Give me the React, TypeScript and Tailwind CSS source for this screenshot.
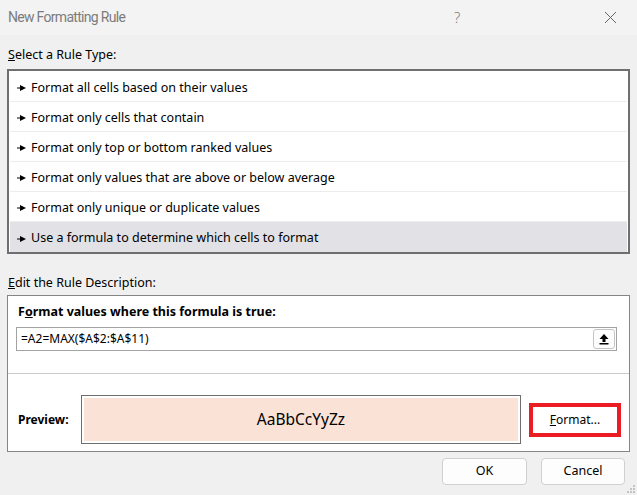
const rules = [
  "Format all cells based on their values",
  "Format only cells that contain",
  "Format only top or bottom ranked values",
  "Format only values that are above or below average",
  "Format only unique or duplicate values",
  "Use a formula to determine which cells to format",
];

function Pointer() {
  return (
    <svg width="10" height="6" viewBox="0 0 10 6" className="shrink-0">
      <rect x="0" y="2.5" width="5" height="1" fill="#000" />
      <path d="M3 0 L9 3 L3 6 Z" fill="#000" />
    </svg>
  );
}

export default function App() {
  return (
    <div
      className="w-[637px] h-[495px] bg-[#f0f0f0] text-black relative overflow-hidden"
      style={{ fontFamily: '"Noto Sans", "Open Sans", sans-serif' }}
    >
      {/* Title bar */}
      <div className="h-[35px] bg-[#f3f3f3] flex items-center pl-[8px]">
        <span
          className="text-[14px] text-[#7c7c7c] flex-1 tracking-[-0.7px]"
          style={{ fontFamily: "Roboto, sans-serif" }}
        >
          New Formatting Rule
        </span>
        <span className="text-[15px] font-light text-[#808080] w-[20px] mr-[130px]">?</span>
        <svg width="13" height="13" viewBox="0 0 13 13" className="mr-[20px]">
          <path d="M1 1 L12 12 M12 1 L1 12" stroke="#666" strokeWidth="1" />
        </svg>
      </div>

      <div className="px-[7px]">
        <div className="pt-[12px] mb-[6px] text-[12.5px] leading-4 pl-[1px]">
          <span className="underline">S</span>elect a Rule Type:
        </div>

        {/* Rule type list */}
        <div className="h-[185px] border-2 border-[#6f6f6f] bg-white p-[1px]">
          {rules.map((r, i) => (
            <div
              key={r}
              className={
                i === rules.length - 1
                  ? "h-[30px] flex items-center gap-[4px] pl-[7px] pt-[3px] bg-[#e1e1e6] text-[12.5px]"
                  : "h-[30px] flex items-center gap-[4px] pl-[7px] pt-[3px] border-b border-[#ececec] text-[12.5px]"
              }
            >
              <Pointer />
              <span>{r}</span>
            </div>
          ))}
        </div>

        <div className="mt-[21px] mb-[4px] text-[12.5px] leading-4 pl-[1px]">
          <span className="underline">E</span>dit the Rule Description:
        </div>

        {/* Description box */}
        <div className="h-[157px] border border-[#858585] bg-white flex flex-col">
          <div className="pt-[8px] pl-[10px] text-[12.5px] font-bold leading-4">
            F<span className="underline">o</span>rmat values where this formula is true:
          </div>
          <div className="mt-[7px] ml-[8px] mr-[12px] h-[24px] border border-[#a3a3a3] flex items-center pl-[4px] pr-px">
            <span className="flex-1 text-[12px]">=A2=MAX($A$2:$A$11)</span>
            <div className="w-[22px] h-[20px] border border-[#c4c4c4] rounded-[3px] bg-[#fdfdfd] flex items-center justify-center">
              <svg width="10" height="12" viewBox="0 0 10 12">
                <path d="M5 1 L9.5 6 L6.5 6 L6.5 9 L3.5 9 L3.5 6 L0.5 6 Z" fill="#000" />
                <rect x="0.5" y="10" width="9" height="1.5" fill="#000" />
              </svg>
            </div>
          </div>
          <div className="mt-[22px] h-px bg-[#cbcbcb]" />
          <div className="flex items-center mt-[21px] pl-[10px]">
            <span className="w-[63px] text-[12px] font-bold">Preview:</span>
            <div className="w-[440px] h-[49px] border border-[#6e6e6e] p-[2px]">
              <div className="h-full bg-[#fbe2d6] flex items-center justify-center text-[15.5px]">
                AaBbCcYyZz
              </div>
            </div>
            <div className="ml-[8px] w-[92px] h-[34px] border-4 border-[#ec1c24] bg-white flex items-center justify-center text-[12px]">
              <span>
                <span className="underline">F</span>ormat...
              </span>
            </div>
          </div>
        </div>

        {/* Footer buttons */}
        <div className="flex justify-end gap-[14px] mt-[6px] pr-[5px]">
          <button className="w-[85px] h-[27px] rounded-[4px] border border-[#d0d0d0] bg-[#fdfdfd] text-[12.5px]">
            OK
          </button>
          <button className="w-[84px] h-[27px] rounded-[4px] border border-[#d0d0d0] bg-[#fdfdfd] text-[12.5px]">
            Cancel
          </button>
        </div>
      </div>

      {/* Resize grip */}
      <svg width="10" height="10" viewBox="0 0 10 10" className="absolute right-[1px] bottom-[1px]">
        <rect x="7" y="1" width="2" height="2" fill="#c4c4c4" />
        <rect x="4" y="4" width="2" height="2" fill="#c4c4c4" />
        <rect x="7" y="4" width="2" height="2" fill="#c4c4c4" />
        <rect x="1" y="7" width="2" height="2" fill="#c4c4c4" />
        <rect x="4" y="7" width="2" height="2" fill="#c4c4c4" />
        <rect x="7" y="7" width="2" height="2" fill="#c4c4c4" />
      </svg>
    </div>
  );
}
